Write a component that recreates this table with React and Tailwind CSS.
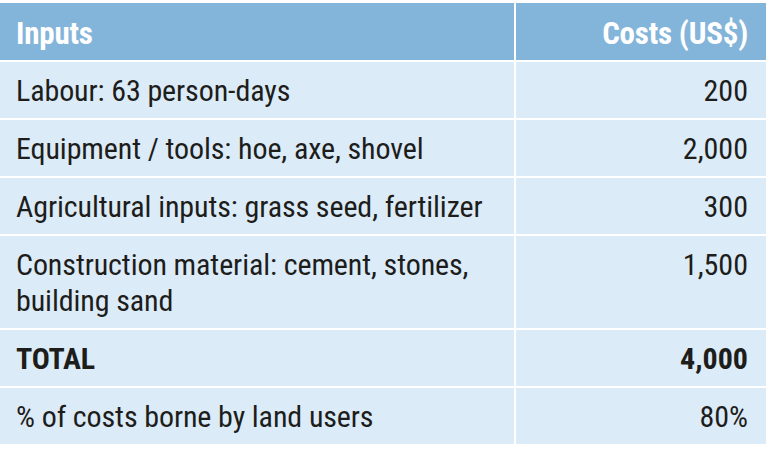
import { Fragment } from 'react';

const rows = [
  { input: 'Labour: 63 person-days', cost: '200' },
  { input: 'Equipment / tools: hoe, axe, shovel', cost: '2,000' },
  { input: 'Agricultural inputs: grass seed, fertilizer', cost: '300' },
  { input: 'Construction material: cement, stones, building sand', cost: '1,500' },
  { input: 'TOTAL', cost: '4,000', bold: true },
  { input: '% of costs borne by land users', cost: '80%' },
];

export default function App() {
  return (
    <div
      className="w-[772px] h-[452px] bg-white pt-[3px] text-[#1d1d1b]"
      style={{ fontFamily: '"Roboto Condensed", Roboto, sans-serif' }}
    >
      <div className="grid grid-cols-[514px_250px] gap-[2px] w-[766px]">
        {/* header */}
        <div className="bg-[#83b4da] pl-4 pt-[13px] pb-2 text-[31px] leading-[36px] font-bold text-white tracking-[-0.2px]">
          Inputs
        </div>
        <div className="bg-[#83b4da] pr-[18px] pt-[13px] pb-2 text-[31px] leading-[36px] font-bold text-white text-right tracking-[-0.2px]">
          Costs (US$)
        </div>

        {rows.map((r) => (
          <Fragment key={r.input}>
            <div
              className={`bg-[#dcebf8] pl-4 pr-6 pt-[11px] pb-[9px] text-[30px] leading-[36px] tracking-[-0.1px] ${r.bold ? 'font-bold' : ''}`}
            >
              {r.input}
            </div>
            <div
              className={`bg-[#dcebf8] pr-[18px] pt-[11px] pb-[9px] text-[30px] leading-[36px] text-right ${r.bold ? 'font-bold' : ''}`}
            >
              {r.cost}
            </div>
          </Fragment>
        ))}
      </div>
    </div>
  );
}
